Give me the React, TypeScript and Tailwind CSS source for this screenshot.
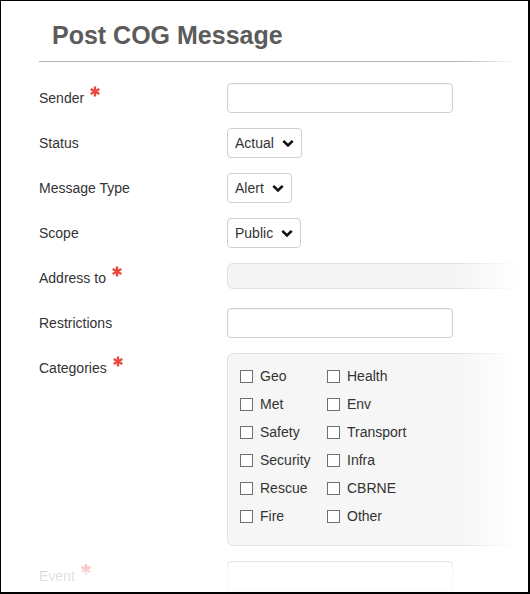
import React from "react";

function Star() {
  return (
    <svg width="10" height="11" viewBox="0 0 10 11" className="ml-[6px] mt-[-2px] shrink-0">
      <g stroke="#e8483e" strokeWidth="2.4" strokeLinecap="butt">
        <line x1="5" y1="0.5" x2="5" y2="10.5" />
        <line x1="0.7" y1="3" x2="9.3" y2="8" />
        <line x1="0.7" y1="8" x2="9.3" y2="3" />
      </g>
    </svg>
  );
}

function Chevron() {
  return (
    <svg width="12" height="9" viewBox="0 0 12 9" className="shrink-0">
      <polyline points="1.3,1.8 6,6.5 10.7,1.8" fill="none" stroke="#111" strokeWidth="2.6" />
    </svg>
  );
}

function Label({ text, req }: { text: string; req?: boolean }) {
  return (
    <div className="w-[188px] shrink-0 flex items-start pt-[5px]">
      <span className="leading-[20px] text-[14px] text-[#333]">{text}</span>
      {req && <Star />}
    </div>
  );
}

function Select({ value }: { value: string }) {
  return (
    <div className="h-[30px] flex items-center gap-[8px] pl-[7px] pr-[7px] border border-[#cfcfcf] rounded-[4px] bg-white text-[14px] text-[#333]">
      <span>{value}</span>
      <Chevron />
    </div>
  );
}

function Input() {
  return <div className="h-[30px] w-[226px] border border-[#cfcfcf] rounded-[4px] bg-white shadow-[inset_0_1px_1px_rgba(0,0,0,0.04)]" />;
}

const cats = [
  ["Geo", "Health"],
  ["Met", "Env"],
  ["Safety", "Transport"],
  ["Security", "Infra"],
  ["Rescue", "CBRNE"],
  ["Fire", "Other"],
];

function Check({ text }: { text: string }) {
  return (
    <div className="w-[87px] flex items-center gap-[7px]">
      <span className="w-[13px] h-[13px] border border-[#707070] bg-white shrink-0" />
      <span className="text-[14px] text-[#333] leading-[20px]">{text}</span>
    </div>
  );
}

export default function App() {
  return (
    <div className="w-[530px] h-[594px] relative overflow-hidden bg-white border-l border-t border-r-2 border-b-2 border-black font-['Liberation_Sans',Arial,sans-serif]">
      <div className="pl-[38px] pt-[20px]">
        <h1 className="ml-[13px] text-[25px] leading-[28px] font-bold text-[#5b5b5b]">Post COG Message</h1>
        <div className="mt-[12px] h-px bg-[#b2b2b2]" />
        <div className="mt-[21px] flex flex-col gap-[15px]">
          <div className="flex items-start">
            <Label text="Sender" req />
            <Input />
          </div>
          <div className="flex items-start">
            <Label text="Status" />
            <Select value="Actual" />
          </div>
          <div className="flex items-start">
            <Label text="Message Type" />
            <Select value="Alert" />
          </div>
          <div className="flex items-start">
            <Label text="Scope" />
            <Select value="Public" />
          </div>
          <div className="flex items-start h-[30px]">
            <Label text="Address to" req />
            <div className="flex-1 h-[26px] bg-[#f5f5f5] border border-[#e2e2e2] rounded-[6px]" />
          </div>
          <div className="flex items-start">
            <Label text="Restrictions" />
            <Input />
          </div>
          <div className="flex items-start">
            <Label text="Categories" req />
            <div className="flex-1 h-[193px] bg-[#f6f6f6] border border-[#e2e2e2] rounded-[6px] pl-[12px] pt-[8px]">
              {cats.map((r) => (
                <div key={r[0]} className="h-[28px] flex items-center">
                  <Check text={r[0]} />
                  <Check text={r[1]} />
                </div>
              ))}
            </div>
          </div>
          <div className="flex items-start">
            <Label text="Event" req />
            <Input />
          </div>
        </div>
      </div>
      <div className="absolute top-0 right-0 bottom-0 w-[70px] bg-linear-to-r from-white/0 to-white to-[85%]" />
      <div className="absolute left-0 right-0 bottom-0 h-[47px] bg-linear-to-b from-white/0 to-white/85 to-[60%]" />
    </div>
  );
}
